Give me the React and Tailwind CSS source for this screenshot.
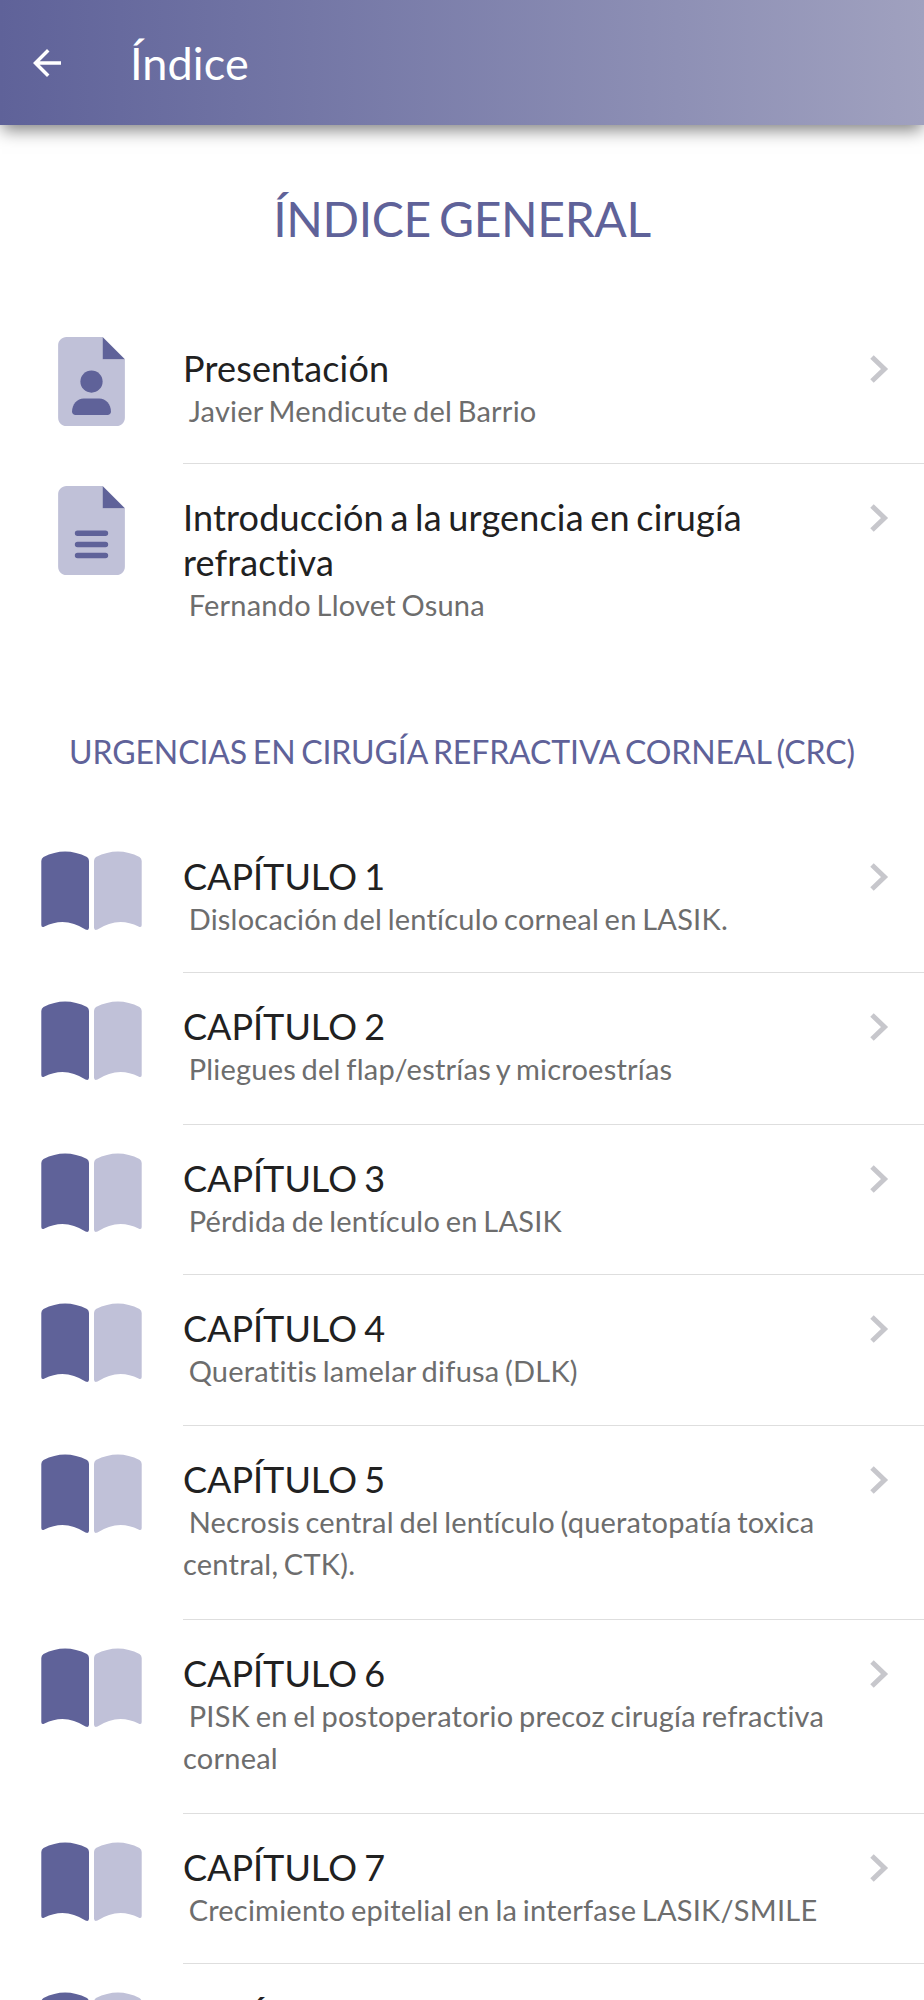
import React from 'react';

const intro = [
  { icon: 'person', title: 'Presentación', text: 'Javier Mendicute del Barrio', height: 'h-[149px]' },
  { icon: 'text', title: 'Introducción a la urgencia en cirugía refractiva', text: 'Fernando Llovet Osuna', height: 'h-[194px]' },
];

const chapters = [
  { title: 'CAPÍTULO 1', text: 'Dislocación del lentículo corneal en LASIK.', height: 'h-[150px]' },
  { title: 'CAPÍTULO 2', text: 'Pliegues del flap/estrías y microestrías', height: 'h-[152px]' },
  { title: 'CAPÍTULO 3', text: 'Pérdida de lentículo en LASIK', height: 'h-[150px]' },
  { title: 'CAPÍTULO 4', text: 'Queratitis lamelar difusa (DLK)', height: 'h-[151px]' },
  { title: 'CAPÍTULO 5', text: 'Necrosis central del lentículo (queratopatía toxica central, CTK).', height: 'h-[194px]' },
  { title: 'CAPÍTULO 6', text: 'PISK en el postoperatorio precoz cirugía refractiva corneal', height: 'h-[194px]' },
  { title: 'CAPÍTULO 7', text: 'Crecimiento epitelial en la interfase LASIK/SMILE', height: 'h-[150px]' },
  { title: 'CAPÍTULO 8', text: '', height: 'h-[151px]' },
];

const BookIcon = () => (
  <svg className="w-[101px] h-[80px]" viewBox="0 0 101 80">
    <path fill="#5f6299" d="M0.300 10Q0.300 7.500 2.500 6Q24 -5 46 6Q48 7.500 48 10V76.500Q48 80 44.500 78.500Q24 65 3.500 75.500Q0.300 77 0.300 74Z" />
    <path fill="#c0c1d8" d="M100.700 10Q100.700 7.500 98.500 6Q77 -5 55 6Q53 7.500 53 10V76.500Q53 80 56.500 78.500Q77 65 97.500 75.500Q100.700 77 100.700 74Z" />
  </svg>
);

const FileIcon = ({ person }) => (
  <svg className="w-[67px] h-[89px]" viewBox="0 0 384 512">
    <path fill="#c0c1d8" d="M384 128H256V0H48C21.500 0 0 21.500 0 48v416c0 26.500 21.500 48 48 48h288c26.500 0 48-21.500 48-48z" />
    <path fill="#5f6299" d="M256 0v128h128z" />
    {person ? (
      <g fill="#5f6299">
        <circle cx="192" cy="256" r="64" />
        <path d="M147 354h90c37 0 67 34 67 76 0 11-9 19-20 19H100c-11 0-20-8-20-19 0-42 30-76 67-76z" />
      </g>
    ) : (
      <path stroke="#5f6299" strokeWidth="32" strokeLinecap="round" d="M112 272h160M112 336h160M112 400h160" />
    )}
  </svg>
);

const Row = ({ icon, title, text, height, last }) => (
  <li className={`flex ${height}`}>
    <div className={`w-[183px] shrink-0 flex items-start pl-[41px] ${icon ? 'pt-[22px]' : 'pt-[28px]'}`}>
      {icon ? <div className="pl-[17px]"><FileIcon person={icon === 'person'} /></div> : <BookIcon />}
    </div>
    <div className={`flex-1 flex justify-between pt-[31px] pr-[35px] ${last ? '' : 'border-b border-[#dedede]'}`}>
      <div className="w-[650px] shrink-0">
        <h3 className={`w-[600px] text-[36px] leading-[45px] text-[#212121] ${icon ? 'tracking-[0.17px] [word-spacing:-2.8px]' : '[word-spacing:-2px]'}`}>
          {title}
        </h3>
        <p className="-mt-px text-[29px] leading-[42px] text-[#6d6d6d] whitespace-pre-wrap tracking-[0.22px] [word-spacing:-2px]">
          {' ' + text}
        </p>
      </div>
      <svg className="w-[19px] h-[28px] mt-[9px] shrink-0" viewBox="0 0 19 28" fill="none" stroke="#c7c7cc" strokeWidth="5">
        <path d="M2 2L14.500 14L2 26" />
      </svg>
    </div>
  </li>
);

const App = () => {
  return (
    <div className="h-[2000px] overflow-hidden bg-white font-['Lato',sans-serif]">
      <header className="h-[125px] flex items-center bg-linear-to-r from-[#5f6299] to-[#a0a1bf] text-white shadow-[0_7px_16px_-2px_rgba(0,0,0,0.5)]">
        <svg className="w-[28px] h-[28px] ml-[33px]" viewBox="4 4 16 16" fill="currentColor">
          <path d="M20 11H7.830l5.590-5.590L12 4l-8 8 8 8 1.410-1.410L7.830 13H20v-2z" />
        </svg>
        <h1 className="ml-[69px] pt-[2px] text-[45px] leading-none tracking-[0.1px]">Índice</h1>
      </header>
      <main>
        <h2 className="pt-[64px] text-center text-[48px] leading-[60px] text-[#5f6299] tracking-[-0.4px] [word-spacing:-3.5px]">
          ÍNDICE GENERAL
        </h2>
        <ul className="pt-[66px]">
          {intro.map((item, i) => (
            <Row key={item.title} {...item} last={i === intro.length - 1} />
          ))}
        </ul>
        <h2 className="pt-[74px] text-center text-[32px] leading-[40px] text-[#5f6299] tracking-[-0.12px] [word-spacing:-2.3px]">
          URGENCIAS EN CIRUGÍA REFRACTIVA CORNEAL (CRC)
        </h2>
        <ul className="pt-[51px]">
          {chapters.map((item) => (
            <Row key={item.title} {...item} />
          ))}
        </ul>
      </main>
    </div>
  );
};

export default App;
